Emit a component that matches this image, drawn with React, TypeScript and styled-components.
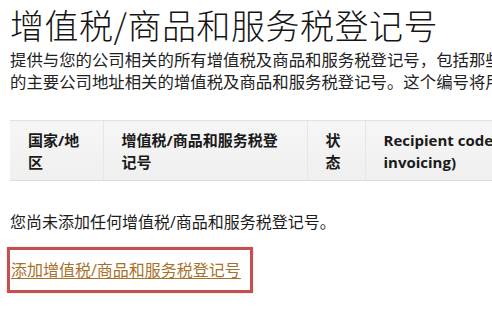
import React from 'react';
import styled, { createGlobalStyle } from 'styled-components';

const cjk = `"Open Sans", "Noto Sans CJK SC", "Noto Sans", sans-serif`;

const GlobalStyle = createGlobalStyle`
	html, body {
		margin: 0;
		padding: 0;
		background: #ffffff;
		overflow: hidden;
	}
	body {
		font-family: ${cjk};
		color: #111111;
	}
`;

const Page = styled.main`
	width: 492px;
	height: 310px;
	padding: 0 0 0 10px;
	box-sizing: border-box;
	overflow: hidden;
`;

const Title = styled.h1`
	margin: 0;
	padding-top: 5px;
	font-family: "Noto Sans CJK SC", sans-serif;
	font-weight: 300;
	font-size: 34px;
	line-height: 40px;
	letter-spacing: 0.5px;
	color: #151515;
	white-space: nowrap;
`;

const Intro = styled.p`
	margin: 4px 0 0;
	width: 900px;
	font-size: 16.4px;
	line-height: 22px;
	color: #222222;
	white-space: nowrap;
`;

const Table = styled.table`
	margin-top: 27px;
	width: 620px;
	border-collapse: collapse;
	table-layout: fixed;
`;

const HeadCell = styled.th<{ $w: number }>`
	width: ${(p) => p.$w}px;
	padding: 8px 18px 7px;
	box-sizing: border-box;
	text-align: left;
	vertical-align: top;
	font-size: 15px;
	font-weight: 700;
	line-height: 22px;
	color: #1a1a1a;
	background: linear-gradient(#f6f6f6, #efefef);
	border-top: 1px solid #e2e2e2;
	border-bottom: 1px solid #dedede;
	border-left: 1px solid #e6e6e6;

	&:first-child {
		border-left: none;
	}
`;

const Latin = styled.span`
	font-family: "Open Sans", sans-serif;
	font-size: 15px;
`;

const Empty = styled.p`
	margin: 30px 0 0;
	font-size: 16px;
	line-height: 22px;
	color: #1c1c1c;
`;

const Marked = styled.div`
	display: inline-flex;
	align-items: center;
	margin: 14px 0 0 -3px;
	padding: 10px 9px 9px 1px;
	border: 3px solid #c4504f;
	box-shadow: 0 0 1px rgba(196, 80, 79, 0.5);
`;

const AddLink = styled.a`
	font-size: 16px;
	line-height: 21px;
	color: #a8712a;
	text-decoration: underline;
	text-underline-offset: 2px;
	cursor: pointer;
`;

const columns = [
	{ w: 93, label: '国家/地区' },
	{ w: 204, label: '增值税/商品和服务税登记号' },
	{ w: 58, label: '状态' },
	{ w: 265, label: 'Recipient code (for e-invoicing)' },
];

export default function App() {
	return (
		<>
			<GlobalStyle />
			<Page>
				<Title>增值税/商品和服务税登记号</Title>
				<Intro>
					提供与您的公司相关的所有增值税及商品和服务税登记号，包括那些与您
					<br />
					的主要公司地址相关的增值税及商品和服务税登记号。这个编号将用于开具发票。
				</Intro>
				<Table>
					<thead>
						<tr>
							{columns.map((c) => (
								<HeadCell key={c.label} $w={c.w}>
									{/^[A-Za-z]/.test(c.label) ? <Latin>{c.label}</Latin> : c.label}
								</HeadCell>
							))}
						</tr>
					</thead>
				</Table>
				<Empty>您尚未添加任何增值税/商品和服务税登记号。</Empty>
				<Marked>
					<AddLink>添加增值税/商品和服务税登记号</AddLink>
				</Marked>
			</Page>
		</>
	);
}
